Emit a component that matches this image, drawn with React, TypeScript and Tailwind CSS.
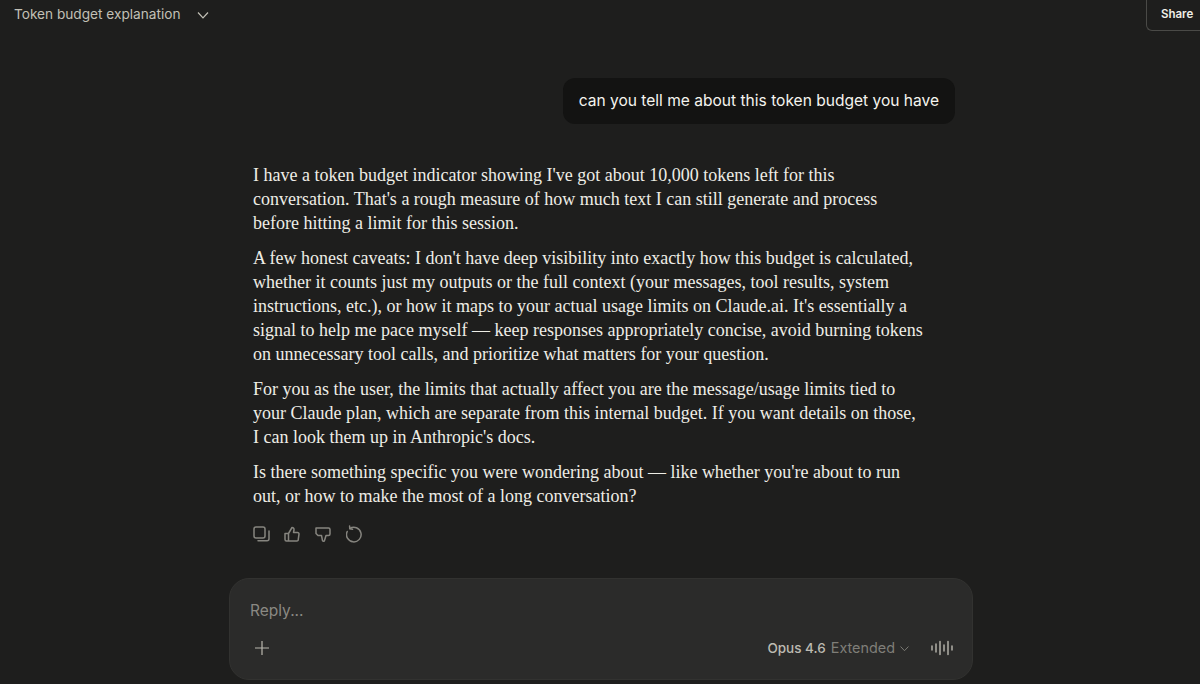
const paragraphs = [
  [
    "I have a token budget indicator showing I've got about 10,000 tokens left for this",
    "conversation. That's a rough measure of how much text I can still generate and process",
    "before hitting a limit for this session.",
  ],
  [
    "A few honest caveats: I don't have deep visibility into exactly how this budget is calculated,",
    "whether it counts just my outputs or the full context (your messages, tool results, system",
    "instructions, etc.), or how it maps to your actual usage limits on Claude.ai. It's essentially a",
    "signal to help me pace myself — keep responses appropriately concise, avoid burning tokens",
    "on unnecessary tool calls, and prioritize what matters for your question.",
  ],
  [
    "For you as the user, the limits that actually affect you are the message/usage limits tied to",
    "your Claude plan, which are separate from this internal budget. If you want details on those,",
    "I can look them up in Anthropic's docs.",
  ],
  [
    "Is there something specific you were wondering about — like whether you're about to run",
    "out, or how to make the most of a long conversation?",
  ],
];

function Svg({ children }: { children: React.ReactNode }) {
  return (
    <svg width="18" height="18" viewBox="0 0 18 18" fill="none" stroke="currentColor" strokeWidth="1.5" strokeLinejoin="round" strokeLinecap="round">
      {children}
    </svg>
  );
}

function CopyIcon() {
  return (
    <Svg>
      <rect x="1" y="2" width="11" height="11" rx="2" />
      <path d="M5 15.800h9a2 2 0 0 0 2-2V6" />
    </Svg>
  );
}
function ThumbUp() {
  return (
    <Svg>
      <path d="M1 8.500h3.500V16H2.500a1.500 1.500 0 0 1-1.500-1.500zM4.500 8.500 8 2.500c1.500 0 2.200 1 2 2.500l-.5 2.500h4a1.500 1.500 0 0 1 1.500 1.700l-.7 5A1.500 1.500 0 0 1 12.800 16H4.500" />
    </Svg>
  );
}
function ThumbDown() {
  return (
    <Svg>
      <path d="M1 3h12.500A1.500 1.500 0 0 1 15 4.500V9a1.500 1.500 0 0 1-1.500 1.500H11L9.500 15.500c-.2 1-1.500 1-2 .2L6.500 10.500H3L1 8.500z" />
    </Svg>
  );
}
function RefreshIcon() {
  return (
    <Svg>
      <path d="M3.800 3.500A7.300 7.300 0 1 1 1.200 6.500" />
      <path d="M3.600 1 3.800 3.800l2.800.4" />
    </Svg>
  );
}
function VoiceIcon() {
  return (
    <svg width="22" height="16" viewBox="0 0 22 16" fill="none" stroke="currentColor" strokeWidth="1.3" strokeLinecap="round">
      <path d="M1 6v4M5 4v8M9 1.500v13M13 5v6M17 1.500v13M21 6v4" />
    </svg>
  );
}
function Chevron({ className }: { className: string }) {
  return (
    <svg className={className} viewBox="0 0 14 14" fill="none" stroke="currentColor" strokeWidth="1.2">
      <path d="M2 4.500 7 9.800l5-5.300" />
    </svg>
  );
}

export default function App() {
  return (
    <div className="flex h-[684px] w-[1200px] flex-col overflow-hidden bg-[#1e1e1d] font-['Inter',sans-serif]">
      <header className="flex h-[31px] items-start justify-between">
        <div className="flex h-[30px] items-center pl-[14px] text-[#c2c0b6]">
          <span className="text-[13.650px] leading-none">Token budget explanation</span>
          <Chevron className="ml-[16px] h-[14px] w-[14px]" />
        </div>
        <div className="-mt-px flex h-[32px] w-[54px] items-center rounded-bl-md border border-r-0 border-[#4a4a47] pl-[14px] text-[11.500px] font-semibold text-[#f0efe9]">
          Share
        </div>
      </header>
      <main className="ml-[229px] flex w-[744px] flex-1 flex-col">
        <div className="mr-[18px] mt-[47px] self-end rounded-xl bg-[#131312] px-4 py-[11px] text-[15.550px] leading-6 whitespace-nowrap text-[#f5f4ee]">
          can you tell me about this token budget you have
        </div>
        <article className="mt-[39px] flex flex-col gap-[11px] px-6 font-['Liberation_Serif',serif] text-[18px] leading-6 text-[#eeede6]">
          {paragraphs.map((lines, i) => (
            <p key={i}>
              {lines.map((line, j) => (
                <span key={j} className="block whitespace-nowrap">
                  {line}
                </span>
              ))}
            </p>
          ))}
        </article>
        <div className="mt-[17px] flex items-center gap-[13px] px-6 text-[#86857f]">
          <CopyIcon />
          <ThumbUp />
          <ThumbDown />
          <RefreshIcon />
        </div>
        <div className="mt-[35px] flex h-[102px] flex-col rounded-[20px] border border-[#323230] bg-[#2b2b2a] px-[20px]">
          <div className="mt-[22px] text-[15.500px] leading-5 text-[#8a8983]">Reply...</div>
          <div className="mt-[15px] flex items-center text-[#b9b7ae]">
            <svg width="24" height="24" viewBox="0 0 24 24" fill="none" stroke="currentColor" strokeWidth="1.2">
              <path d="M5 12h14M12 5v14" />
            </svg>
            <span className="ml-auto text-[13.500px] font-medium text-[#bdbbb2]">Opus 4.6</span>
            <span className="ml-[5px] text-[14.400px] text-[#7f7e78]">Extended</span>
            <Chevron className="ml-[4px] h-[11px] w-[11px] text-[#7f7e78]" />
            <span className="ml-[21px] mr-[-1px] text-[#c6c4bb]">
              <VoiceIcon />
            </span>
          </div>
        </div>
      </main>
    </div>
  );
}
